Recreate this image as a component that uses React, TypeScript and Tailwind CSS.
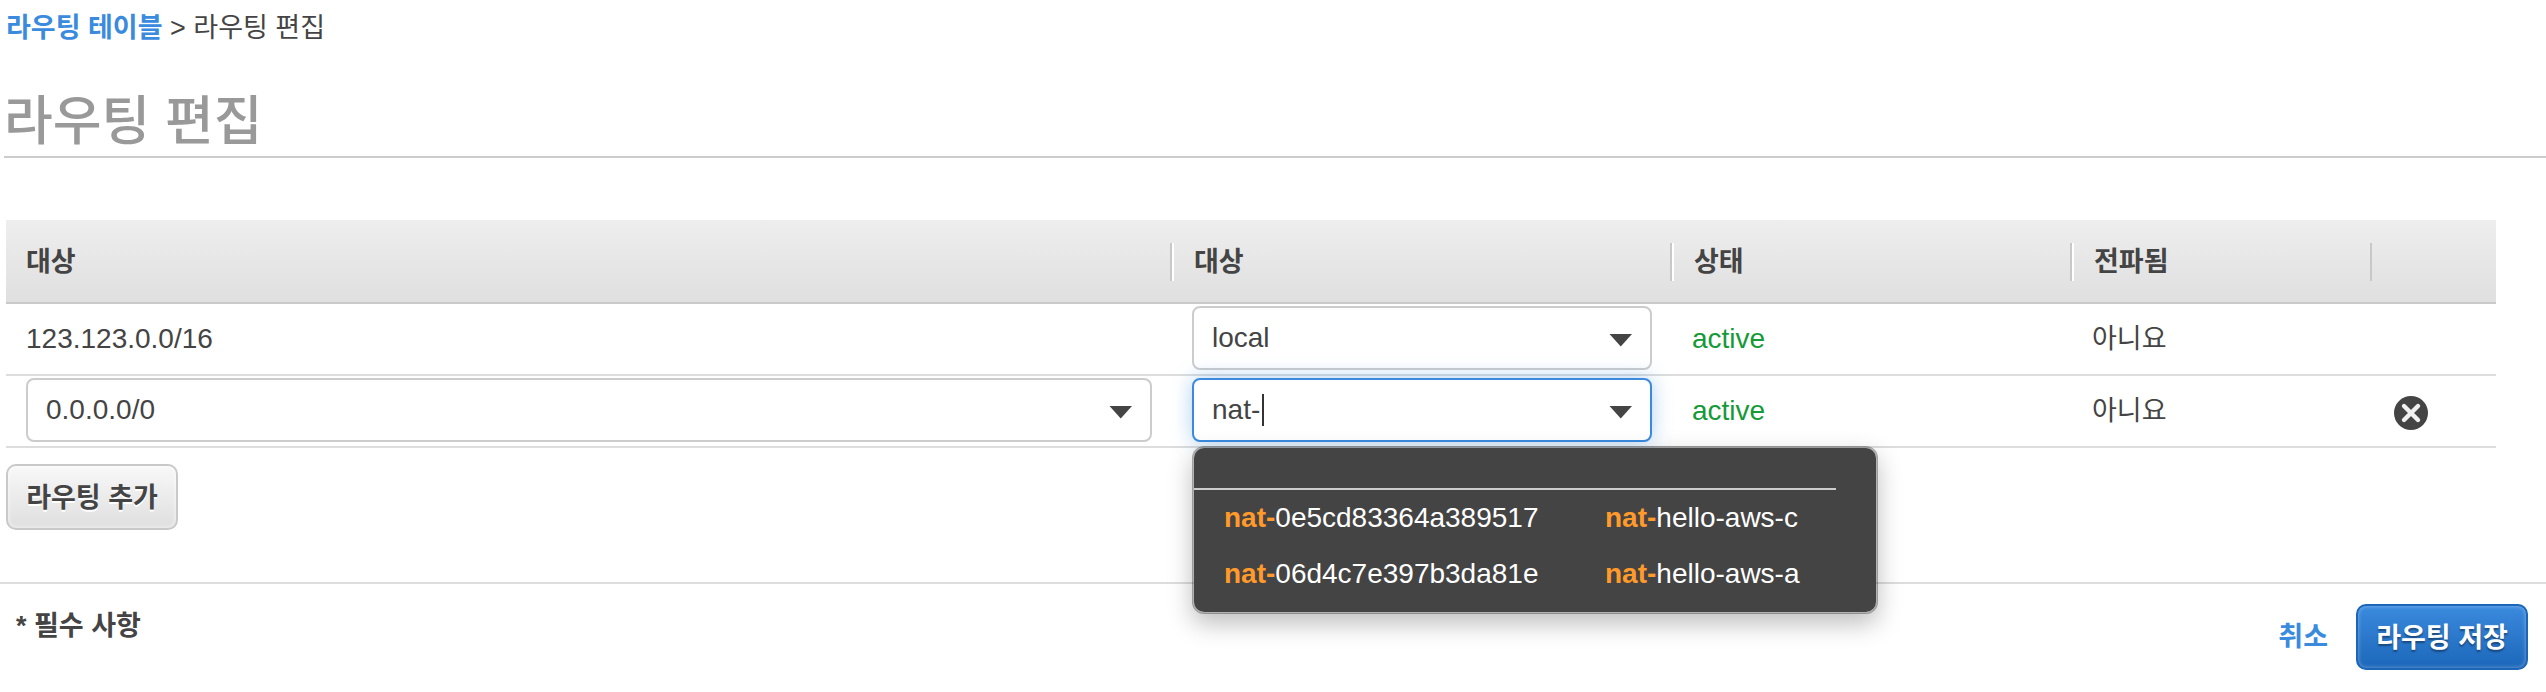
import React from "react";

const SANS = "font-['Liberation_Sans','Noto_Sans_CJK_KR',sans-serif]";

function Combo({
  id,
  label,
  value,
  focused = false,
  children,
}: {
  id: string;
  label: string;
  value: string;
  focused?: boolean;
  children?: React.ReactNode;
}) {
  return (
    <div className="relative">
      <div
        className={
          focused
            ? "flex h-16 items-center rounded-lg border-2 border-[#3a8ade] bg-white shadow-[0_0_20px_rgba(58,138,222,0.4)]"
            : "flex h-16 items-center rounded-lg border-2 border-[#cccccc] bg-white"
        }
      >
        <input
          id={id}
          type="text"
          role="combobox"
          aria-label={label}
          aria-expanded={focused}
          aria-controls={`${id}-list`}
          defaultValue={value}
          className="h-full min-w-0 flex-1 bg-transparent pl-[18px] text-[28px] outline-none"
        />
        <button type="button" aria-label={`${label} 열기`} className="flex h-full items-center pr-[18px] pl-2">
          <svg viewBox="0 0 24 14" className="mt-1 h-[14px] w-6" fill="#444444">
            <path d="M1.5 1h22.5L12.75 13.5z" />
          </svg>
        </button>
      </div>
      {focused && <span className="absolute top-4 left-[70px] h-8 w-[2px] bg-[#333333]" />}
      {children}
    </div>
  );
}

function HeaderCell({ children, first = false, last = false }: { children?: React.ReactNode; first?: boolean; last?: boolean }) {
  return (
    <th className="p-0 text-left font-bold">
      <div
        className={
          last
            ? "h-[38px]"
            : first
              ? "flex h-[38px] items-center border-r-2 border-[#c8c8c8] pl-5"
              : "flex h-[38px] items-center border-r-2 border-l-2 border-r-[#c8c8c8] border-l-white pl-5"
        }
      >
        {children}
      </div>
    </th>
  );
}

const suggestions = [
  { id: "0e5cd83364a389517", name: "hello-aws-c" },
  { id: "06d4c7e397b3da81e", name: "hello-aws-a" },
];

function Match({ rest }: { rest: string }) {
  return (
    <>
      <b className="font-bold text-[#ff9a2b]">nat-</b>
      {rest}
    </>
  );
}

function Suggestions() {
  return (
    <div
      id="target-1-list"
      role="listbox"
      className="absolute top-full left-0 z-10 mt-1 h-[168px] w-[686px] rounded-xl border-2 border-black/30 bg-[#444444] bg-clip-padding text-[28px] text-white shadow-[0_10px_24px_rgba(0,0,0,0.25)]"
    >
      <div className="mr-10 h-[42px] border-b-2 border-[#cccccc]" />
      {suggestions.map((s) => (
        <div key={s.id} role="option" aria-selected={false} className="flex h-14 items-center pl-[30px]">
          <span className="w-[381px]">
            <Match rest={s.id} />
          </span>
          <span>
            <Match rest={s.name} />
          </span>
        </div>
      ))}
    </div>
  );
}

export default function App() {
  return (
    <main className={`${SANS} bg-white text-[27px] leading-9 text-[#444444]`}>
      <nav className="px-[6px] pt-[10px]">
        <a href="#tables" className="font-bold text-[#3a8ade]">
          라우팅 테이블
        </a>{" "}
        &gt; 라우팅 편집
      </nav>
      <h1 className="ml-1 border-b-2 border-[#cccccc] pt-[42px] text-[53px] leading-[68px] font-medium text-[#999999]">라우팅 편집</h1>

      <div className="mt-[62px] mr-[50px] ml-[6px]">
        <table className="w-full table-fixed border-separate border-spacing-0">
          <colgroup>
            <col />
            <col className="w-[500px]" />
            <col className="w-[400px]" />
            <col className="w-[300px]" />
            <col className="w-[124px]" />
          </colgroup>
          <thead>
            <tr className="h-[84px] bg-linear-to-b from-[#eeeeee] to-[#dfdfdf] shadow-[inset_0_-2px_0_#c9c9c9]">
              <HeaderCell first>대상</HeaderCell>
              <HeaderCell>대상</HeaderCell>
              <HeaderCell>상태</HeaderCell>
              <HeaderCell>전파됨</HeaderCell>
              <HeaderCell last />
            </tr>
          </thead>
          <tbody>
            <tr className="h-[72px]">
              <td className="border-b-2 border-[#dddddd] px-5 py-0 text-[28px]">123.123.0.0/16</td>
              <td className="border-b-2 border-[#dddddd] px-5 pt-[2px] pb-1">
                <Combo id="target-0" label="대상" value="local" />
              </td>
              <td className="border-b-2 border-[#dddddd] px-5 py-0 text-[28px] text-[#149a37]">active</td>
              <td className="border-b-2 border-[#dddddd] px-5 py-0">아니요</td>
              <td className="border-b-2 border-[#dddddd] p-0" />
            </tr>
            <tr className="h-[72px]">
              <td className="border-b-2 border-[#dddddd] px-5 pt-[2px] pb-1">
                <Combo id="dest-1" label="대상 CIDR" value="0.0.0.0/0" />
              </td>
              <td className="border-b-2 border-[#dddddd] px-5 pt-[2px] pb-1">
                <Combo id="target-1" label="대상" value="nat-" focused>
                  <Suggestions />
                </Combo>
              </td>
              <td className="border-b-2 border-[#dddddd] px-5 py-0 text-[28px] text-[#149a37]">active</td>
              <td className="border-b-2 border-[#dddddd] px-5 py-0">아니요</td>
              <td className="border-b-2 border-[#dddddd] px-[22px] py-0">
                <button type="button" aria-label="라우팅 제거" className="mt-1 block">
                  <svg viewBox="0 0 34 34" className="size-[34px]">
                    <circle cx="17" cy="17" r="17" fill="#444444" />
                    <path d="M10 10l14 14M24 10L10 24" stroke="#f0f0f0" strokeWidth="4.4" strokeLinecap="round" />
                  </svg>
                </button>
              </td>
            </tr>
          </tbody>
        </table>
        <button
          type="button"
          className="mt-4 block h-[66px] w-[172px] rounded-[10px] border-2 border-[#c9c9c9] bg-linear-to-b from-[#f8f8f8] to-[#dfdfdf] pt-[2px] font-bold shadow-[inset_0_0_4px_rgba(255,255,255,0.8)] text-shadow-[0_2px_0_#ffffff]"
        >
          라우팅 추가
        </button>
      </div>

      <footer className="mt-[52px] flex justify-between border-t-2 border-[#dddddd] pr-[18px] pl-4">
        <p className="pt-6 font-bold">* 필수 사항</p>
        <div className="flex items-center gap-7 pt-5">
          <a href="#cancel" className="font-bold text-[#3a8ade]">
            취소
          </a>
          <button
            type="button"
            className="h-[66px] w-[172px] rounded-[10px] border-2 border-[#1b66b8] bg-linear-to-b from-[#3a8ade] to-[#1c67ba] pt-[2px] font-bold text-white shadow-[inset_0_0_4px_rgba(255,255,255,0.4)] text-shadow-[0_2px_2px_rgba(0,0,0,0.4)]"
          >
            라우팅 저장
          </button>
        </div>
      </footer>
    </main>
  );
}
